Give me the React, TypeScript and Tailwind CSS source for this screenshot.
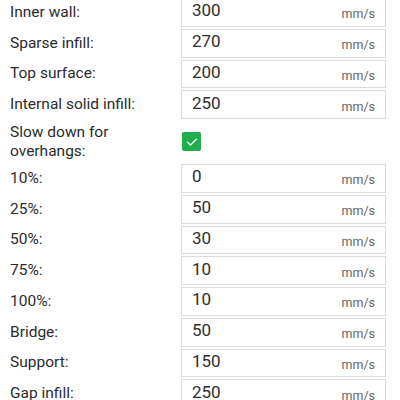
const speeds = [
  { label: "Inner wall:", value: "300" },
  { label: "Sparse infill:", value: "270" },
  { label: "Top surface:", value: "200" },
  { label: "Internal solid infill:", value: "250" },
];

const overhangs = [
  { label: "10%:", value: "0" },
  { label: "25%:", value: "50" },
  { label: "50%:", value: "30" },
  { label: "75%:", value: "10" },
  { label: "100%:", value: "10" },
  { label: "Bridge:", value: "50" },
  { label: "Support:", value: "150" },
  { label: "Gap infill:", value: "250" },
];

function SpeedRow({ label, value }: { label: string; value: string }) {
  return (
    <div className="flex h-[28.75px] items-center">
      <div className="w-[181px] shrink-0 pl-[10px] text-[15.5px] text-[#2b2b2b]">{label}</div>
      <div className="flex h-full w-[205px] items-center justify-between border border-[#dcdcdc] bg-white pl-[10px] pr-[10px]">
        <span className="text-[17px] leading-none text-[#2e2e2e] -mt-[3px]">{value}</span>
        <span className="self-end pb-[5px] text-[12.5px] leading-none text-[#666666]">mm/s</span>
      </div>
    </div>
  );
}

export default function App() {
  return (
    <div className="h-[400px] w-[400px] overflow-hidden bg-white font-['Roboto',sans-serif]">
      <div className="-mt-[2px] flex flex-col gap-[2px]">
        {speeds.map((s) => (
          <SpeedRow key={s.label} {...s} />
        ))}

        {/* Slow down for overhangs */}
        <div className="flex h-[41px] items-center">
          <div className="w-[181px] shrink-0 pl-[10px] text-[15.5px] leading-[19px] text-[#2b2b2b]">
            Slow down for
            <br />
            overhangs:
          </div>
          <div className="ml-[1px] flex h-[19px] w-[19px] items-center justify-center rounded-[2px] bg-[#1fae4b]">
            <svg width="14" height="14" viewBox="0 0 14 14" fill="none">
              <path d="M2.5 7.2 L5.6 10 L11.3 4.2" stroke="white" strokeWidth="1.4" strokeLinecap="round" strokeLinejoin="round" />
            </svg>
          </div>
        </div>

        {overhangs.map((s) => (
          <SpeedRow key={s.label} {...s} />
        ))}
      </div>
    </div>
  );
}
